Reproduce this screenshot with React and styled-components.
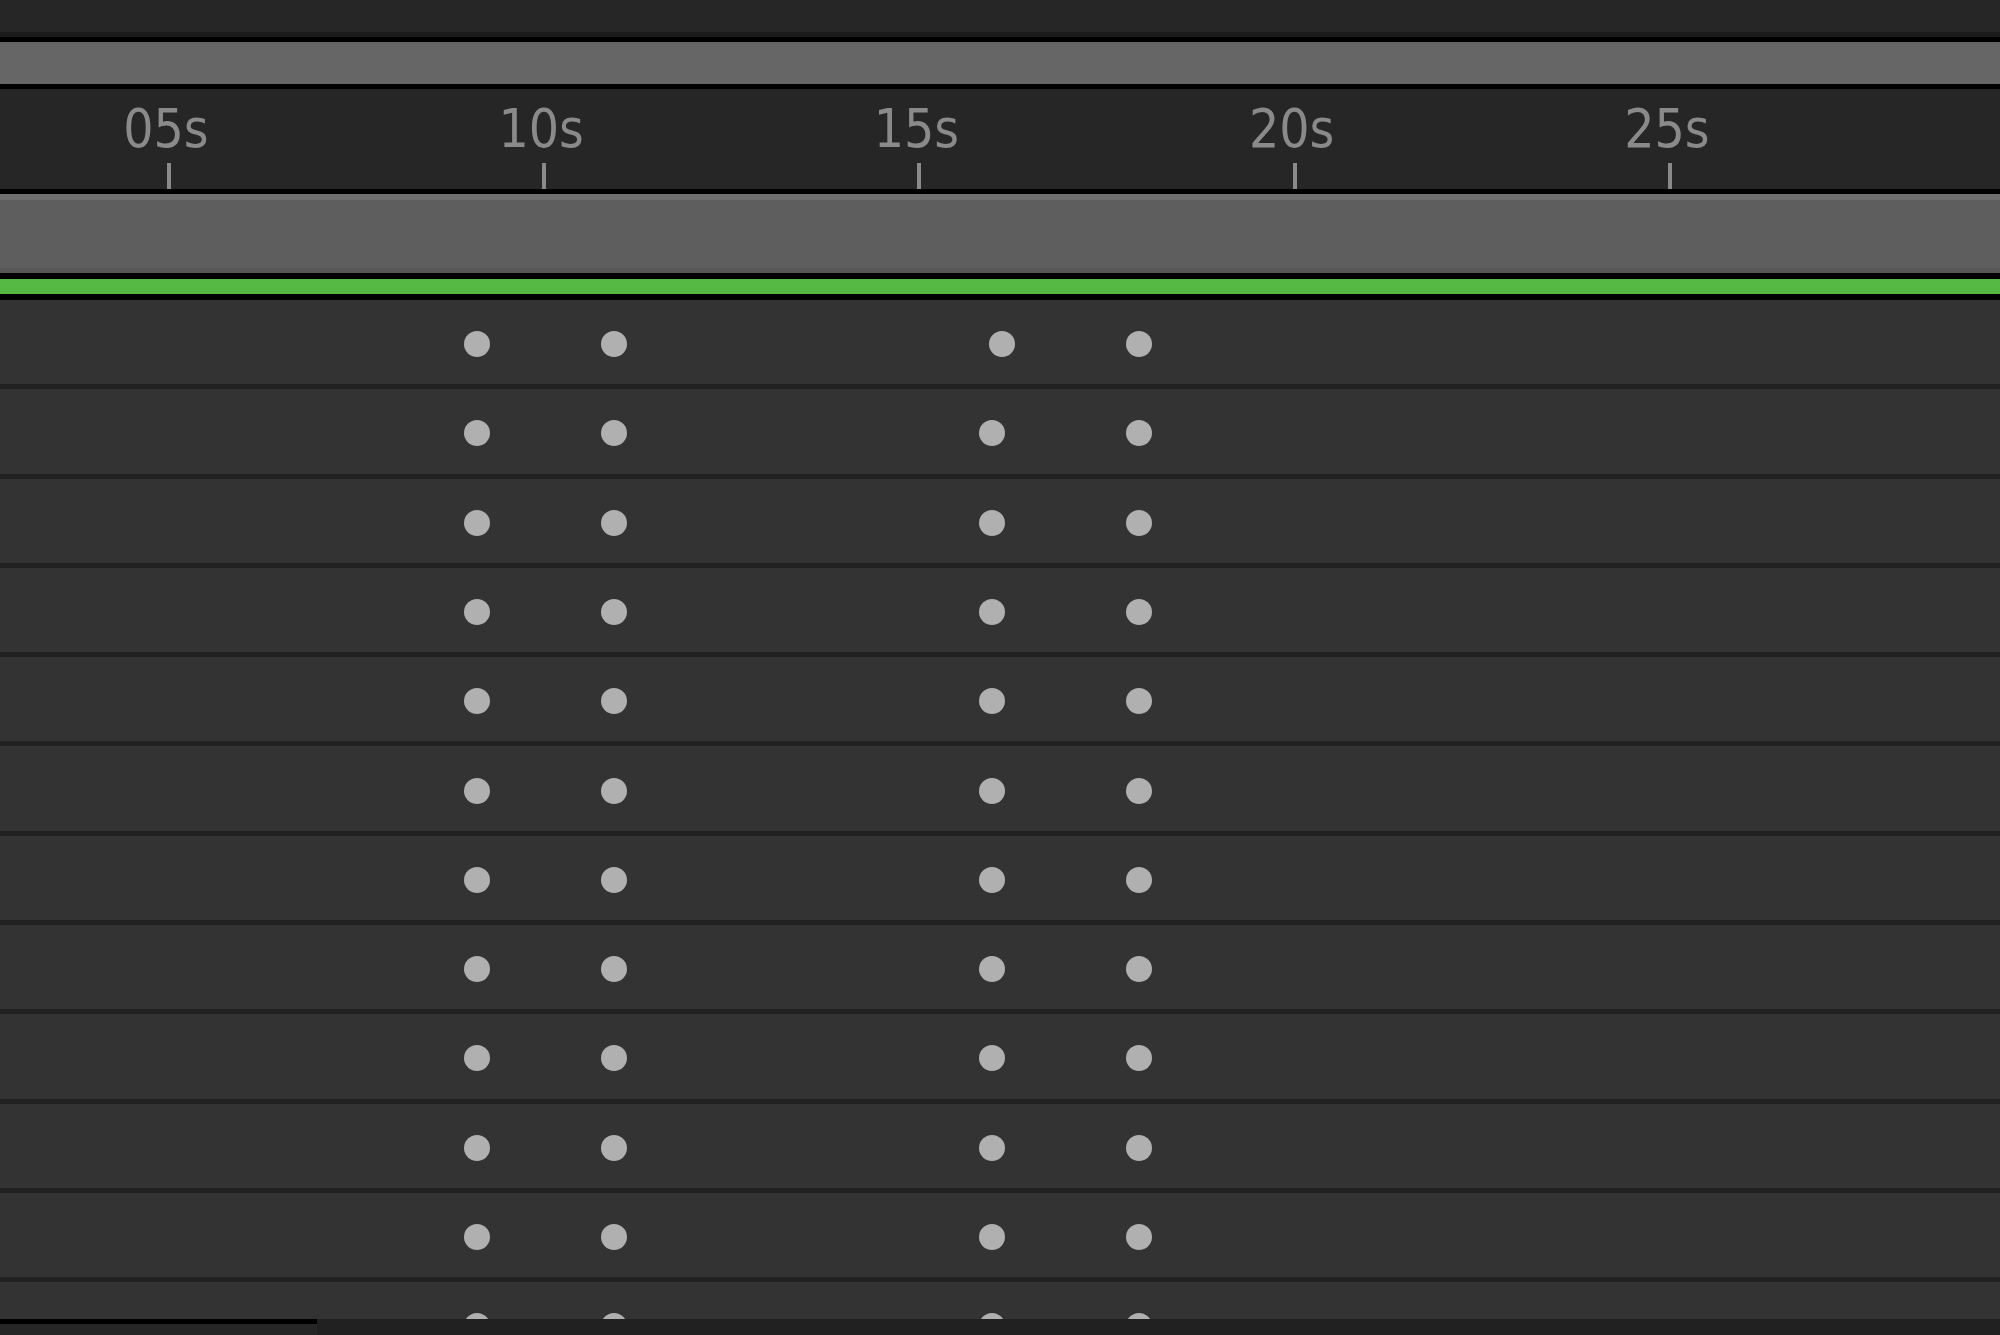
import styled, { createGlobalStyle } from "styled-components";

const GlobalStyle = createGlobalStyle`
  html, body {
    margin: 0;
    padding: 0;
    background: #262626;
    overflow: hidden;
  }
`;

// timeline scale: px per second, and x of 0s
const PX_PER_SEC = 75.05;
const ORIGIN = -206.3;
const toX = (t) => ORIGIN + t * PX_PER_SEC;

const TICKS = [5, 10, 15, 20, 25];
const KEYS = [9.105, 10.93, 15.965, 17.93];
const ROWS = 12;

const Page = styled.div`
  width: 2000px;
  height: 1335px;
  display: flex;
  flex-direction: column;
  background: #262626;
  font-family: "DejaVu Sans Condensed", "DejaVu Sans", sans-serif;
  overflow: hidden;
`;

const TopBar = styled.div`
  height: 32px;
  background: #262626;
  border-bottom: 5px solid #1b1b1b;
  flex-shrink: 0;
`;

const WorkArea = styled.div`
  height: 42px;
  background: #666666;
  border-top: 5px solid #000;
  border-bottom: 5px solid #000;
  flex-shrink: 0;
`;

const Ruler = styled.div`
  position: relative;
  height: 100px;
  background: #262626;
  border-bottom: 5px solid #000;
  flex-shrink: 0;
`;

const Label = styled.span`
  position: absolute;
  top: 13px;
  transform: translateX(-50%);
  font-size: 53px;
  line-height: 53px;
  font-stretch: condensed;
  color: #8a8a8a;
  white-space: nowrap;
`;

const Tick = styled.div`
  position: absolute;
  bottom: 0;
  width: 4px;
  height: 26px;
  margin-left: -2px;
  background: #8a8a8a;
`;

const RangeBar = styled.div`
  height: 68px;
  background: #5e5e5e;
  border-top: 6px solid #6e6e6e;
  border-bottom: 5px solid #575757;
  flex-shrink: 0;
`;

const LayerBar = styled.div`
  height: 15px;
  background: #55b944;
  border-top: 6px solid #000;
  border-bottom: 6px solid #000;
  flex-shrink: 0;
`;

const Tracks = styled.div`
  height: 1019px;
  overflow: hidden;
  background: #333333;
  flex-shrink: 0;
`;

const Track = styled.div`
  position: relative;
  height: 84.29px;
  background: #333333;
  border-bottom: 5px solid #212121;
`;

const Keyframe = styled.div`
  position: absolute;
  top: 50%;
  width: 26px;
  height: 26px;
  margin: -11px 0 0 -13px;
  border-radius: 50%;
  background: #b0b0b0;
`;

const Footer = styled.div`
  flex: 1;
  display: flex;
`;

const FooterLeft = styled.div`
  width: 317px;
  background: #262626;
  border-top: 5px solid #000;
`;

const FooterRight = styled.div`
  flex: 1;
  background: #212121;
`;

export default function App() {
  return (
    <>
      <GlobalStyle />
      <Page>
        <TopBar />
        <WorkArea />
        <Ruler>
          {TICKS.map((t) => (
            <div key={t}>
              <Label style={{ left: toX(t) - 3 }}>
                {String(t).padStart(2, "0")}s
              </Label>
              <Tick style={{ left: toX(t) }} />
            </div>
          ))}
        </Ruler>
        <RangeBar />
        <LayerBar />
        <Tracks>
          {Array.from({ length: ROWS }).map((_, i) => (
            <Track key={i}>
              {KEYS.map((k, j) => (
                <Keyframe
                  key={j}
                  style={{ left: toX(i === 0 && j === 2 ? 16.105 : k) }}
                />
              ))}
            </Track>
          ))}
        </Tracks>
        <Footer>
          <FooterLeft />
          <FooterRight />
        </Footer>
      </Page>
    </>
  );
}
